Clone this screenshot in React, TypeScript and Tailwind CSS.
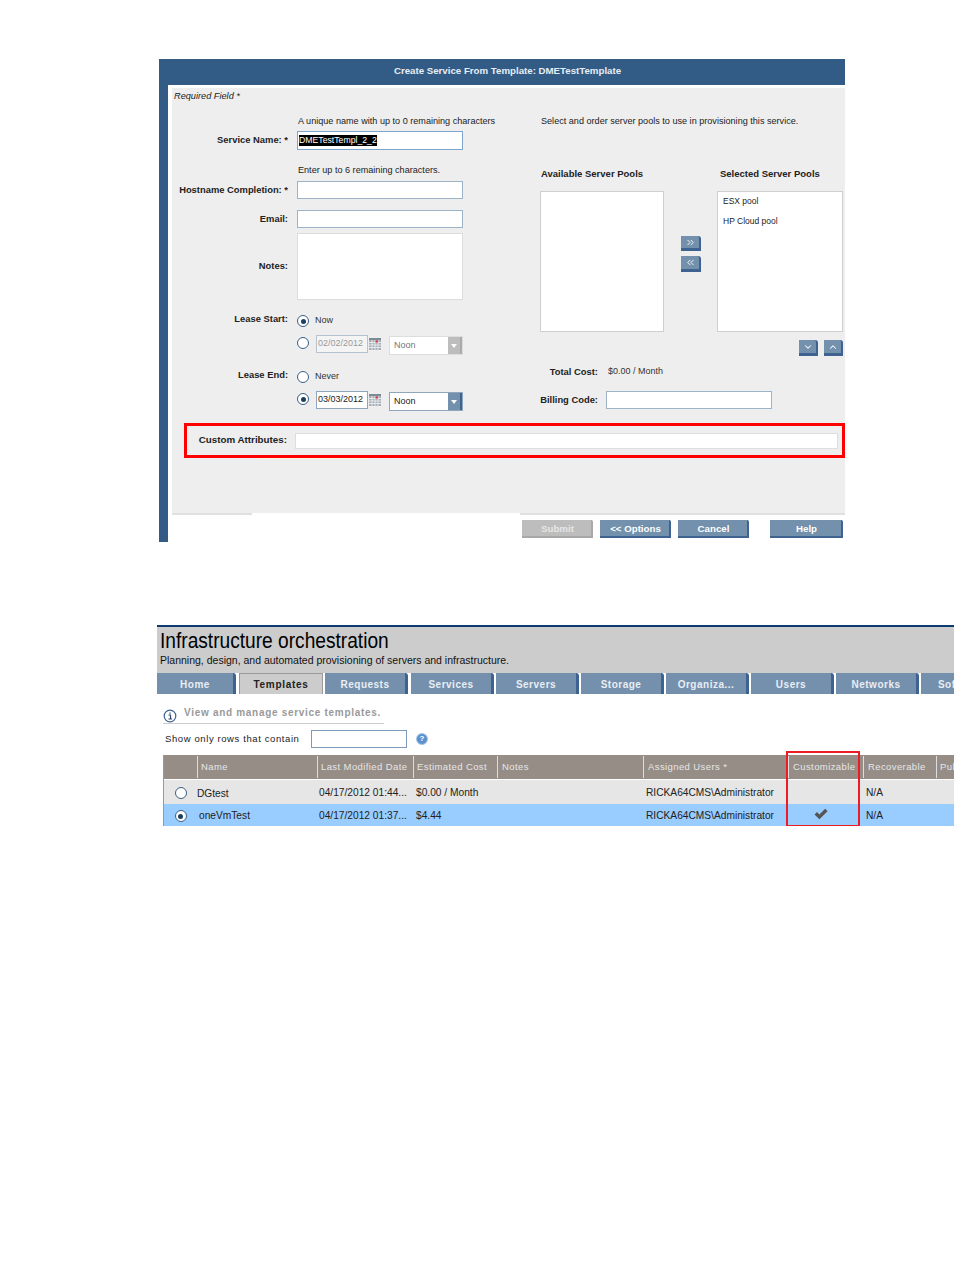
import type { ReactNode } from "react"
import { ChevronDown, ChevronUp, ChevronsLeft, ChevronsRight } from "lucide-react"

const tabs = [
  { label: "Home", cls: "w-[79px] mr-[3px]" },
  { label: "Templates", cls: "w-[84px] mr-[2px]", active: true },
  { label: "Requests", cls: "w-[83px] mr-[3px]" },
  { label: "Services", cls: "w-[83px] mr-[2px]" },
  { label: "Servers", cls: "w-[83px] mr-[2px]" },
  { label: "Storage", cls: "w-[83px] mr-[2px]" },
  { label: "Organiza...", cls: "w-[83px] mr-[2px]" },
  { label: "Users", cls: "w-[83px] mr-[2px]" },
  { label: "Networks", cls: "w-[83px] mr-[2px]" },
  { label: "Software", cls: "w-[83px] mr-[2px]" },
]

const columns = [
  { label: "", cls: "" },
  { label: "Name", cls: "pl-[3px]" },
  { label: "Last Modified Date", cls: "pl-[3px]" },
  { label: "Estimated Cost", cls: "pl-[3px]" },
  { label: "Notes", cls: "pl-[4px]" },
  { label: "Assigned Users *", cls: "pl-[4px]" },
  { label: "Customizable", cls: "pl-[4px]" },
  { label: "Recoverable", cls: "pl-[4px]" },
  { label: "Public", cls: "pl-[3px]" },
]

function Radio({ on, className = "" }: { on?: boolean; className?: string }) {
  return (
    <span className={`flex h-[12px] w-[12px] shrink-0 items-center justify-center rounded-full border border-[#3a5f85] bg-white ${className}`}>
      {on && <span className="h-[5px] w-[5px] rounded-full bg-[#1f3f60]" />}
    </span>
  )
}

function Label({ children, className = "" }: { children: ReactNode; className?: string }) {
  return <div className={`flex shrink-0 justify-end whitespace-nowrap text-[9.4px] font-bold text-[#222] ${className}`}>{children}</div>
}

function TextBox({ className = "", children }: { className?: string; children?: ReactNode }) {
  return <div className={`border border-[#9db3c8] bg-white ${className}`}>{children}</div>
}

function CalendarIcon() {
  return (
    <svg width="12" height="12" viewBox="0 0 12 12" className="ml-[1px] mt-[3px] shrink-0">
      <rect x="0" y="0" width="12" height="12" fill="#a7b0ba" />
      <rect x="0" y="0" width="12" height="2" fill="#7d8a9a" />
      <path d="M3 2v10M6 2v10M9 2v10M0 4.5h12M0 7h12M0 9.5h12" stroke="#f4f4f4" strokeWidth="0.8" />
      <rect x="6.5" y="2.5" width="2.5" height="2" fill="#e0333a" />
    </svg>
  )
}

function DateRow({ on, date, enabled }: { on?: boolean; date: string; enabled?: boolean }) {
  return (
    <div className="flex h-[20px] items-start">
      <Radio on={on} className="ml-[125px] mt-[2px]" />
      <div className={`ml-[7px] flex h-[18px] w-[52px] items-center border pl-[1px] text-[9px] ${enabled ? "border-[#8fa6bd] bg-white text-[#222]" : "border-[#b5c2cf] bg-[#f4f4f4] text-[#999]"}`}>
        {date}
      </div>
      <CalendarIcon />
      <div className={`ml-[8px] mt-[1px] flex h-[19px] w-[74px] border bg-white ${enabled ? "border-[#8fa6bd]" : "border-[#dddddd]"}`}>
        <span className={`flex flex-1 items-center pl-[4px] pt-px text-[9px] ${enabled ? "text-[#222]" : "text-[#777]"}`}>Noon</span>
        <span className={`flex w-[14px] items-center justify-center border-r-2 ${enabled ? "border-[#3f6391] bg-[#7390ac]" : "border-[#aaa] bg-[#bdbdbd]"}`}>
          <span className="h-0 w-0 border-x-[3px] border-t-[4px] border-x-transparent border-t-white" />
        </span>
      </div>
    </div>
  )
}

function IconButton({ children, className = "" }: { children: ReactNode; className?: string }) {
  return (
    <div className={`flex items-center justify-center rounded-tr-[3px] border-b-[3px] border-r-[2px] border-[#3f6391] bg-[#7390ac] text-white ${className}`}>
      {children}
    </div>
  )
}

function FormButton({ label, className = "" }: { label: string; className?: string }) {
  return (
    <div className={`flex h-[18px] items-center justify-center rounded-tr-[2px] border-b-[2px] border-r-[2px] pl-[2px] pt-[2px] text-[9.7px] font-bold ${className}`}>
      {label}
    </div>
  )
}

function ServiceForm() {
  return (
    <div className="ml-[159px] w-[686px] border-l-[9px] border-[#325c85]">
      <div className="-ml-[9px] flex h-[26px] w-[686px] items-center justify-center bg-[#325c85] pb-[2px] pl-[11px] text-[9.7px] font-bold text-[#e8eef4]">
        Create Service From Template: DMETestTemplate
      </div>
      <div className="ml-[4px] mt-[3px] h-[425px] bg-[#eeeeee]">
        <div className="flex">
          {/* left column */}
          <div className="w-[368px] shrink-0">
            <div className="flex h-[16px] items-center pl-[2px] pt-px text-[9.2px] italic text-[#222]">Required Field *</div>
            <div className="ml-[126px] mt-[10px] flex h-[14px] items-center pt-px text-[9.1px] text-[#222]">
              A unique name with up to 0 remaining characters
            </div>
            <div className="mt-[3px] flex items-center">
              <Label className="w-[116px]">Service Name: *</Label>
              <div className="ml-[9px] flex h-[19px] w-[166px] items-center border border-[#7fa5cc] bg-white pl-[1px]">
                <span className="-mt-px bg-black text-[8.7px] leading-[11px] text-white">DMETestTempl_2_2</span>
              </div>
            </div>
            <div className="ml-[126px] mt-[13px] flex h-[14px] items-center pt-px text-[9.1px] text-[#222]">
              Enter up to 6 remaining characters.
            </div>
            <div className="mt-[4px] flex items-center">
              <Label className="w-[116px]">Hostname Completion: *</Label>
              <TextBox className="ml-[9px] h-[18px] w-[166px]" />
            </div>
            <div className="mt-[11px] flex items-center">
              <Label className="w-[116px]">Email:</Label>
              <TextBox className="ml-[9px] h-[18px] w-[166px]" />
            </div>
            <div className="mt-[5px] flex items-center">
              <Label className="w-[116px]">Notes:</Label>
              <div className="ml-[9px] h-[67px] w-[166px] border border-[#dcdcdc] bg-white" />
            </div>
            <div className="mt-[14px] flex h-[14px] items-start">
              <Label className="w-[116px] leading-[10px]">Lease Start:</Label>
              <Radio on className="ml-[9px] mt-[1px]" />
              <span className="ml-[6px] text-[9px] leading-[12px] text-[#333]">Now</span>
            </div>
            <div className="mt-[7px]">
              <DateRow date="02/02/2012" />
            </div>
            <div className="mt-[15px] flex h-[14px] items-start">
              <Label className="w-[116px] leading-[10px]">Lease End:</Label>
              <Radio className="ml-[9px] mt-[1px]" />
              <span className="ml-[6px] text-[9px] leading-[12px] text-[#333]">Never</span>
            </div>
            <div className="mt-[7px]">
              <DateRow on enabled date="03/03/2012" />
            </div>
          </div>

          {/* right column */}
          <div className="flex-1">
            <div className="ml-px mt-[26px] flex h-[14px] items-center pt-px text-[9.1px] text-[#222]">
              Select and order server pools to use in provisioning this service.
            </div>
            <div className="mt-[39px] flex h-[14px] items-center text-[9.5px] font-bold text-[#222]">
              <span className="ml-px w-[179px]">Available Server Pools</span>
              <span>Selected Server Pools</span>
            </div>
            <div className="mt-[10px] flex h-[141px]">
              <div className="w-[124px] border border-[#cfcfcf] bg-white" />
              <div className="w-[53px] pl-[17px] pt-[45px]">
                <IconButton className="h-[15px] w-[20px]"><ChevronsRight size={11} strokeWidth={2} /></IconButton>
                <IconButton className="mt-[5px] h-[16px] w-[20px]"><ChevronsLeft size={11} strokeWidth={2} /></IconButton>
              </div>
              <div className="w-[126px] border border-[#cfcfcf] bg-white pl-[5px] text-[8.5px] text-[#222]">
                <div className="mt-[4px] leading-[10px]">ESX pool</div>
                <div className="mt-[10px] leading-[10px]">HP Cloud pool</div>
              </div>
            </div>
            <div className="mt-[8px] flex w-[303px] justify-end gap-[6px]">
              <IconButton className="h-[16px] w-[19px]"><ChevronDown size={10} strokeWidth={2.5} /></IconButton>
              <IconButton className="h-[16px] w-[19px]"><ChevronUp size={10} strokeWidth={2.5} /></IconButton>
            </div>
            <div className="mt-[9px] flex h-[14px] items-center">
              <Label className="w-[58px]">Total Cost:</Label>
              <span className="ml-[10px] text-[9px] text-[#333]">$0.00 / Month</span>
            </div>
            <div className="mt-[12px] flex items-center">
              <Label className="w-[58px]">Billing Code:</Label>
              <TextBox className="ml-[8px] h-[18px] w-[166px]" />
            </div>
          </div>
        </div>

        <div className="ml-[12px] mt-[12px] flex h-[35px] w-[661px] items-center border-[3px] border-[#ff0000]">
          <Label className="w-[100px] text-[9.8px]">Custom Attributes:</Label>
          <div className="ml-[8px] h-[16px] w-[543px] border border-[#dedede] bg-white" />
        </div>
        <div className="ml-[86px] h-px w-[110px] bg-[#f9f5dd]" />
      </div>
      <div className="ml-[4px] flex h-[2px] justify-between">
        <div className="w-[80px] bg-[#e0e0e0]" />
        <div className="w-[325px] bg-[#e0e0e0]" />
      </div>
      <div className="ml-[4px] flex h-[27px] pl-[350px] pt-[5px]">
        <FormButton label="Submit" className="w-[71px] border-[#a8a8a8] bg-[#bdbdbd] text-[#e6e6e6]" />
        <FormButton label="<< Options" className="ml-[7px] w-[71px] border-[#3f6391] bg-[#7390ac] text-white" />
        <FormButton label="Cancel" className="ml-[7px] w-[71px] border-[#3f6391] bg-[#7390ac] text-white" />
        <FormButton label="Help" className="ml-[21px] w-[73px] border-[#3f6391] bg-[#7390ac] text-white" />
      </div>
    </div>
  )
}

function Templates() {
  return (
    <div className="relative ml-[157px] mt-[83px] w-[797px] overflow-hidden">
      <div className="h-[48px] border-t-2 border-[#0d3a6e] bg-[#cccccc] pl-[3px]">
        <div className="h-[26px] origin-left scale-x-[0.87] whitespace-nowrap text-[22px] leading-[28px] text-black">Infrastructure orchestration</div>
        <div className="text-[10.5px] leading-[14px] text-[#111]">
          Planning, design, and automated provisioning of servers and infrastructure.
        </div>
      </div>
      <div className="flex h-[21px] w-[900px] bg-white">
        {tabs.map((t) =>
          t.active ? (
            <div key={t.label} className={`flex shrink-0 items-center justify-center border-x border-t border-[#9a9a9a] bg-[#cccccc] text-[10px] font-bold tracking-[0.7px] text-[#222] ${t.cls}`}>
              {t.label}
            </div>
          ) : (
            <div key={t.label} className={`flex shrink-0 items-center justify-center rounded-tr-[3px] border-r-[3px] border-[#3f6391] bg-[#7590ad] pt-px text-[10px] font-bold tracking-[0.5px] text-[#e8eef4] ${t.cls}`}>
              {t.label}
            </div>
          ),
        )}
      </div>

      <div className="ml-[6px] mt-[11px] flex h-[19px] w-[221px] items-start border-b border-[#cccccc]">
        <svg width="14" height="14" viewBox="0 0 14 14" className="mt-[4px] shrink-0">
          <circle cx="7" cy="7" r="5.8" fill="white" stroke="#3f6391" strokeWidth="1.2" />
          <path d="M5.5 6h2v3.6M5.5 10h3.6M7 3.4v1.4" fill="none" stroke="#2c4a6c" strokeWidth="1.2" />
        </svg>
        <span className="ml-[7px] mt-px text-[10px] font-bold leading-[14px] tracking-[0.7px] text-[#999]">View and manage service templates.</span>
      </div>
      <div className="mt-[6px] flex h-[18px] items-center pl-[8px]">
        <span className="w-[146px] whitespace-nowrap text-[9.5px] tracking-[0.6px] text-[#222]">Show only rows that contain</span>
        <div className="h-[18px] w-[96px] border border-[#7d9ab8] bg-white" />
        <span className="ml-[9px] flex h-[12px] w-[12px] items-center justify-center rounded-full border border-[#a9c6e8] bg-[#5b90d0] text-[8px] font-bold text-white">?</span>
      </div>

      <div className="ml-[6px] mt-[7px] border-l border-[#999]">
        <div className="grid h-[24px] grid-cols-[33px_120px_96px_84px_146px_145px_75px_73px_18px] bg-[#968d86]">
          {columns.map((c, i) => (
            <div key={i} className={`flex items-center whitespace-nowrap text-[9.5px] tracking-[0.4px] text-[#e6e6e6] ${i > 0 ? "my-[1px] border-l border-[#dddddd]" : ""} ${c.cls}`}>
              {c.label}
            </div>
          ))}
        </div>
        <div className="mt-[1px] grid h-[24px] grid-cols-[33px_120px_96px_84px_146px_145px_75px_73px_18px] items-center bg-[#e6e6e6] pt-px text-[10.2px] text-[#222]">
          <div className="flex justify-center"><Radio /></div>
          <div className="pt-[2px]">DGtest</div>
          <div className="whitespace-nowrap pl-[2px]">04/17/2012 01:44...</div>
          <div className="pl-[3px]">$0.00 / Month</div>
          <div />
          <div className="whitespace-nowrap pl-[3px]">RICKA64CMS\Administrator</div>
          <div />
          <div className="pl-[3px]">N/A</div>
          <div />
        </div>
        <div className="grid h-[22px] grid-cols-[33px_120px_96px_84px_146px_145px_75px_73px_18px] items-center bg-[#99ccff] pt-px text-[10.2px] text-[#222]">
          <div className="flex justify-center pt-[1px]"><Radio on /></div>
          <div className="pl-[2px]">oneVmTest</div>
          <div className="whitespace-nowrap pl-[2px]">04/17/2012 01:37...</div>
          <div className="pl-[3px]">$4.44</div>
          <div />
          <div className="whitespace-nowrap pl-[3px]">RICKA64CMS\Administrator</div>
          <div className="flex justify-center pr-[9px]">
            <svg width="14" height="12" viewBox="0 0 14 12" className="-mt-[3px]">
              <path d="M0.5 6.5 L3 4 L5.4 6.4 L11.2 0.8 L13.6 3.2 L5.4 11.2 Z" fill="#555" />
            </svg>
          </div>
          <div className="pl-[3px]">N/A</div>
          <div />
        </div>
      </div>

      {/* highlight drawn over the Customizable column */}
      <div className="absolute left-[629px] top-[126px] h-[76px] w-[74px] border-2 border-[#ed1c24]" />
    </div>
  )
}

export default function App() {
  return (
    <div className="h-[1270px] w-[954px] overflow-hidden bg-white pt-[59px] font-['Liberation_Sans',Arial,sans-serif]">
      <ServiceForm />
      <Templates />
    </div>
  )
}
